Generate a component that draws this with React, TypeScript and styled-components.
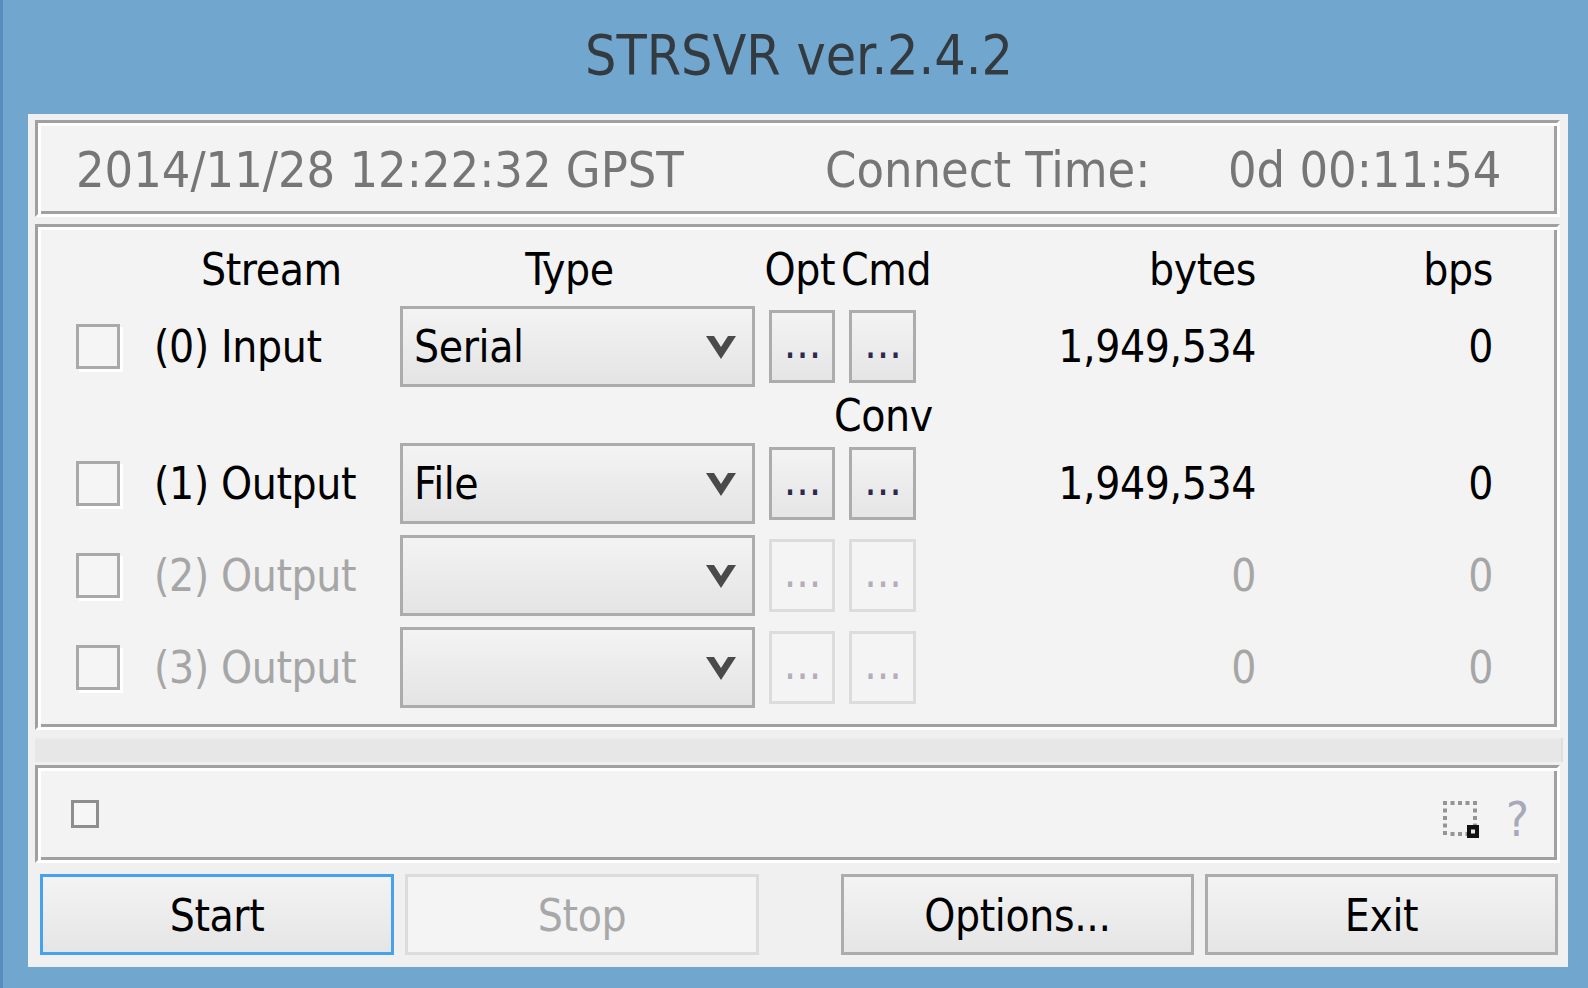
import React from "react";
import styled, { createGlobalStyle } from "styled-components";

const FONT = `"DejaVu Sans Condensed", "Liberation Sans Narrow", "Liberation Sans", Arial, sans-serif`;

const GlobalStyle = createGlobalStyle`
  html, body { margin: 0; padding: 0; }
  body {
    width: 1588px;
    height: 988px;
    overflow: hidden;
    background: #71a6cf;
    font-family: ${FONT};
  }
  * { box-sizing: border-box; }
`;

const Window = styled.div`
  width: 1588px;
  height: 988px;
  background: #71a6cf;
  border-left: 3px solid #5a8dbd;
  display: flex;
  flex-direction: column;
`;

const TitleBar = styled.div`
  height: 114px;
  display: flex;
  align-items: center;
  justify-content: center;
  padding-left: 7px;
  padding-bottom: 4px;
  font-size: 55px;
  color: #333a40;
`;

const Client = styled.div`
  margin: 0 20px 21px 25px;
  height: 853px;
  background: #f0f0f0;
  display: flex;
  flex-direction: column;
  padding: 6px 8px 12px 7px;
  font-size: 44px;
  letter-spacing: -0.4px;
  color: #000;
`;

const Panel = styled.div<{ $h: number; $mt?: number }>`
  height: ${(p) => p.$h}px;
  margin-top: ${(p) => p.$mt ?? 0}px;
  border: 3px solid;
  border-color: #a0a0a0 #ffffff #ffffff #a0a0a0;
  box-shadow: inset 3px 3px 0 #ffffff, inset -3px -3px 0 #a0a0a0;
  background: #f3f3f3;
`;

const TimePanel = styled(Panel)`
  display: grid;
  grid-template-columns: 749px 403px auto;
  align-items: center;
  padding: 3px 0 0 38px;
  font-size: 50px;
  letter-spacing: 0;
  color: #767676;
  white-space: nowrap;
`;

const StreamPanel = styled(Panel)`
  display: flex;
  flex-direction: column;
  padding-left: 38px;
`;

const Row = styled.div<{ $h: number; $mt?: number; $pt?: number }>`
  display: grid;
  grid-template-columns: 78px 246px 355px 80px 81px 340px 237px;
  align-items: center;
  height: ${(p) => p.$h}px;
  margin-top: ${(p) => p.$mt ?? 0}px;
  padding-top: ${(p) => p.$pt ?? 0}px;
  white-space: nowrap;
`;

const HeadCell = styled.div<{ $col: number; $align?: string; $pl?: number; $pr?: number; $ml?: number }>`
  grid-column: ${(p) => p.$col};
  justify-self: ${(p) => p.$align ?? "start"};
  padding-left: ${(p) => p.$pl ?? 0}px;
  padding-right: ${(p) => p.$pr ?? 0}px;
  margin-left: ${(p) => p.$ml ?? 0}px;
`;

const CheckBox = styled.div`
  width: 44px;
  height: 45px;
  border: 3px solid #a9a9a9;
  background: #f5f5f5;
  box-shadow: 3px 3px 0 #ffffff;
`;

const StreamLabel = styled.div<{ $disabled?: boolean }>`
  color: ${(p) => (p.$disabled ? "#a6a6a6" : "#000")};
`;

const Combo = styled.div`
  height: 81px;
  border: 3px solid #acacac;
  background: linear-gradient(#f3f3f3, #e4e4e4);
  display: flex;
  align-items: center;
  justify-content: space-between;
  padding: 0 16px 0 11px;
`;

const DotButton = styled.div<{ $disabled?: boolean; $w: number }>`
  justify-self: end;
  width: ${(p) => p.$w}px;
  height: 73px;
  border: 3px solid ${(p) => (p.$disabled ? "#dcdcdc" : "#acacac")};
  background: ${(p) => (p.$disabled ? "#f4f4f4" : "linear-gradient(#f3f3f3, #e5e5e5)")};
  color: ${(p) => (p.$disabled ? "#b4aebb" : "#2e2850")};
  display: flex;
  align-items: center;
  justify-content: center;
  letter-spacing: 0;
  padding: 0 0 8px 1px;
`;

const Value = styled.div<{ $disabled?: boolean }>`
  justify-self: end;
  color: ${(p) => (p.$disabled ? "#a6a6a6" : "#000")};
`;

const Strip = styled.div`
  height: 25px;
  margin-top: 7px;
  margin-right: -3px;
  background: #e7e7e7;
  border-top: 2px solid #ededed;
  border-right: 2px solid #dedede;
`;

const BottomPanel = styled(Panel)`
  display: flex;
  align-items: center;
  justify-content: space-between;
  padding: 0 28px 0 33px;
`;

const SmallCheck = styled.div`
  width: 28px;
  height: 28px;
  border: 3px solid #8e8e8e;
  background: #f6f6f6;
`;

const RightTools = styled.div`
  display: flex;
  align-items: center;
  gap: 27px;
  margin-top: 10px;
`;

const Help = styled.div`
  font-size: 48px;
  color: #a8a8ba;
  letter-spacing: 0;
  line-height: 1;
`;

const ButtonBar = styled.div`
  margin-top: 11px;
  height: 81px;
  display: flex;
  justify-content: space-between;
  padding: 0 2px 0 5px;
`;

const ButtonGroup = styled.div`
  display: flex;
  gap: 11px;
`;

const Button = styled.div<{ $focused?: boolean; $disabled?: boolean; $w: number }>`
  width: ${(p) => p.$w}px;
  height: 81px;
  border: 3px solid
    ${(p) => (p.$focused ? "#46a1ef" : p.$disabled ? "#dcdcdc" : "#acacac")};
  background: ${(p) => (p.$disabled ? "#f4f4f4" : "linear-gradient(#f3f3f3, #e5e5e5)")};
  color: ${(p) => (p.$disabled ? "#a8a8a8" : "#000")};
  display: flex;
  align-items: center;
  justify-content: center;
  padding-top: 2px;
`;

const Chevron = () => (
  <svg width="30" height="25" viewBox="0 0 30 25">
    <polygon points="0,2 8,2 15,13 22,2 30,2 15,25" fill="#4a4a4a" />
  </svg>
);

const Grip = () => {
  const dots: React.ReactNode[] = [];
  const pos = [0, 7.5, 15, 22.5, 30];
  const c = "#959595";
  pos.forEach((x) => dots.push(<rect key={`t${x}`} x={x} y={0} width={4} height={4} fill={c} />));
  pos.slice(1).forEach((y) => dots.push(<rect key={`l${y}`} x={0} y={y} width={4} height={4} fill={c} />));
  pos.slice(1, 4).forEach((y) => dots.push(<rect key={`r${y}`} x={30} y={y} width={4} height={4} fill={c} />));
  pos.slice(1, 4).forEach((x) => dots.push(<rect key={`b${x}`} x={x} y={31} width={4} height={4} fill={c} />));
  return (
    <svg width="36" height="37" viewBox="0 0 36 37">
      {dots}
      <rect x="24" y="24" width="12" height="13" fill="#111" />
      <rect x="28" y="28.5" width="4" height="4" fill="#e8e8e8" />
    </svg>
  );
};

type StreamRowData = {
  label: string;
  type: string;
  enabled: boolean;
  bytes: string;
  bps: string;
};

const rows: StreamRowData[] = [
  { label: "(0) Input", type: "Serial", enabled: true, bytes: "1,949,534", bps: "0" },
  { label: "(1) Output", type: "File", enabled: true, bytes: "1,949,534", bps: "0" },
  { label: "(2) Output", type: "", enabled: false, bytes: "0", bps: "0" },
  { label: "(3) Output", type: "", enabled: false, bytes: "0", bps: "0" },
];

const StreamRow = ({ r, mt }: { r: StreamRowData; mt?: number }) => (
  <Row $h={81} $mt={mt}>
    <CheckBox />
    <StreamLabel $disabled={!r.enabled}>{r.label}</StreamLabel>
    <Combo>
      <span>{r.type}</span>
      <Chevron />
    </Combo>
    <DotButton $w={66} $disabled={!r.enabled}>...</DotButton>
    <DotButton $w={67} $disabled={!r.enabled}>...</DotButton>
    <Value $disabled={!r.enabled}>{r.bytes}</Value>
    <Value $disabled={!r.enabled}>{r.bps}</Value>
  </Row>
);

export default function App() {
  return (
    <>
      <GlobalStyle />
      <Window>
        <TitleBar>STRSVR ver.2.4.2</TitleBar>
        <Client>
          <TimePanel $h={97}>
            <span>2014/11/28 12:22:32 GPST</span>
            <span>Connect Time:</span>
            <span>0d 00:11:54</span>
          </TimePanel>

          <StreamPanel $h={506} $mt={7}>
            <Row $h={79} $pt={5}>
              <HeadCell $col={2} $pl={47}>Stream</HeadCell>
              <HeadCell $col={3} $align="center" $pr={16}>Type</HeadCell>
              <HeadCell $col={4} $align="end">Opt</HeadCell>
              <HeadCell $col={5} $pl={6}>Cmd</HeadCell>
              <HeadCell $col={6} $align="end">bytes</HeadCell>
              <HeadCell $col={7} $align="end">bps</HeadCell>
            </Row>
            <StreamRow r={rows[0]} />
            <Row $h={56}>
              <HeadCell $col={5} $ml={-1}>Conv</HeadCell>
            </Row>
            <StreamRow r={rows[1]} />
            <StreamRow r={rows[2]} mt={11} />
            <StreamRow r={rows[3]} mt={11} />
          </StreamPanel>

          <Strip />

          <BottomPanel $h={98} $mt={3}>
            <SmallCheck />
            <RightTools>
              <Grip />
              <Help>?</Help>
            </RightTools>
          </BottomPanel>

          <ButtonBar>
            <ButtonGroup>
              <Button $w={354} $focused>Start</Button>
              <Button $w={354} $disabled>Stop</Button>
            </ButtonGroup>
            <ButtonGroup>
              <Button $w={353}>Options...</Button>
              <Button $w={353}>Exit</Button>
            </ButtonGroup>
          </ButtonBar>
        </Client>
      </Window>
    </>
  );
}
